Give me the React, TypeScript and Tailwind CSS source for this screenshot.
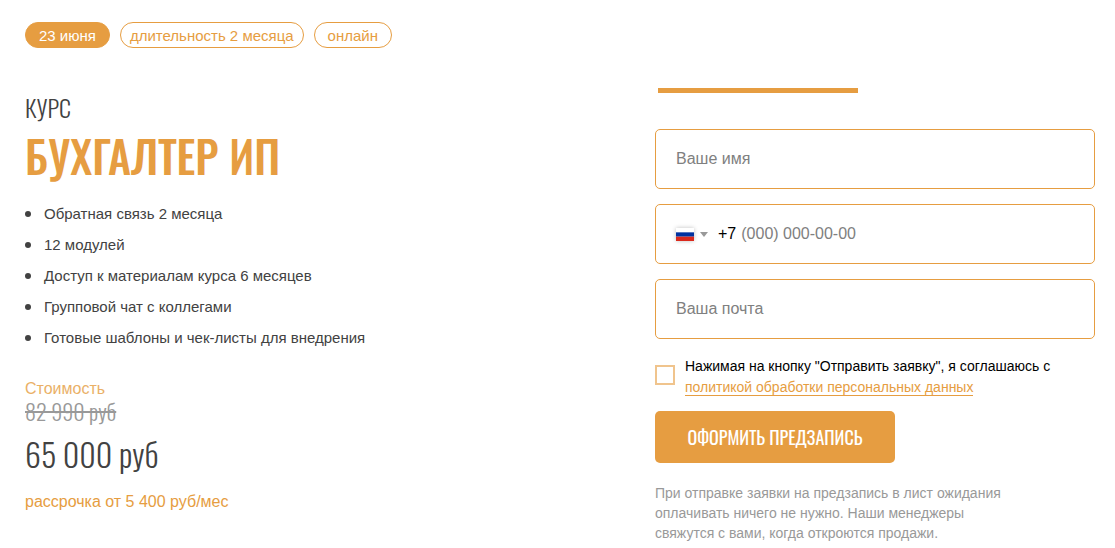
import React, { useState } from 'react';

const features = [
  'Обратная связь 2 месяца',
  '12 модулей',
  'Доступ к материалам курса 6 месяцев',
  'Групповой чат с коллегами',
  'Готовые шаблоны и чек-листы для внедрения',
];

const oswald = "font-['Oswald','Liberation_Sans',sans-serif]";
const field = 'w-full h-[60px] rounded-[5px] border border-[#e69d41] bg-white text-base text-black placeholder:text-[#808080]';
const pill = 'rounded-full border border-[#e69d41] pt-[2px]';

const FlagRu = () => (
  <svg width="18" height="13" viewBox="0 0 18 13" className="shadow-[0_0_4px_rgba(0,0,0,0.25)]" aria-hidden="true">
    <path fill="#fff" d="M0 0h18v4.33H0z" />
    <path fill="#0032a0" d="M0 4.33h18v4.33H0z" />
    <path fill="#da291c" d="M0 8.66h18V13H0z" />
  </svg>
);

const CourseInfo = () => {
  return (
    <section className="flex flex-col items-start text-[#424242]">
      <div className="flex flex-wrap gap-[10px] text-[15px] leading-[22px] text-[#e69d41]">
        <span className={`${pill} bg-[#e69d41] px-[13px] text-white`}>23 июня</span>
        <span className={`${pill} px-[9px]`}>длительность 2 месяца</span>
        <span className={`${pill} px-[13px]`}>онлайн</span>
      </div>
      <p className={`${oswald} mt-11 text-2xl leading-[30px] font-light`}>КУРС</p>
      <h1 className={`${oswald} mt-1 text-[44px] leading-[60px] font-medium text-[#e69d41]`}>БУХГАЛТЕР ИП</h1>
      <ul className="mt-3 text-[15px] leading-[31px]">
        {features.map((item) => (
          <li key={item} className="flex items-center gap-[13px]">
            <span className="size-[6px] shrink-0 rounded-full bg-[#424242]" />
            {item}
          </li>
        ))}
      </ul>
      <p className="mt-[26px] text-base leading-5 text-[#e69d41] opacity-80">Стоимость</p>
      <p className={`${oswald} text-[22px] leading-6 font-light text-[#999] line-through decoration-2`}>82 990 руб</p>
      <p className={`${oswald} mt-[7px] text-[32px] leading-[48px] font-light`}>65 000 руб</p>
      <p className="mt-3 text-base leading-6 text-[#e69d41]">рассрочка от 5 400 руб/мес</p>
    </section>
  );
};

const SignupForm = () => {
  const [phone, setPhone] = useState('');

  return (
    <section className="w-full max-w-[440px]">
      <div className="ml-[3px] h-[5px] w-[200px] bg-[#e69d41]" />
      <form className="mt-9 flex flex-col gap-[15px]" onSubmit={(e) => e.preventDefault()}>
        <input type="text" name="name" aria-label="Ваше имя" placeholder="Ваше имя" className={`${field} px-5`} />
        <div className={`${field} flex items-center pl-5`}>
          <button type="button" aria-label="Код страны" className="flex items-center gap-[6px]">
            <FlagRu />
            <svg width="8" height="5" viewBox="0 0 8 5" aria-hidden="true">
              <path fill="#999" d="M0 0h8L4 5z" />
            </svg>
          </button>
          <span className="ml-[10px]">+7</span>
          <input
            type="tel"
            name="phone"
            aria-label="Телефон"
            placeholder="(000) 000-00-00"
            value={phone}
            onChange={(e) => setPhone(e.target.value)}
            className="ml-[5px] min-w-0 flex-1 outline-none placeholder:text-[#808080]"
          />
        </div>
        <input type="email" name="email" aria-label="Ваша почта" placeholder="Ваша почта" className={`${field} px-5`} />
        <div className="flex items-start gap-[10px] pt-[2px] text-sm leading-[21px] text-black">
          <input
            id="agree"
            type="checkbox"
            className="mt-[9px] size-5 shrink-0 appearance-none border-2 border-[#e69d41] opacity-60 checked:bg-[#e69d41]"
          />
          <label htmlFor="agree">
            Нажимая на кнопку "Отправить заявку", я соглашаюсь с{' '}
            <a href="#policy" className="border-b border-[#e69d41] text-[#e69d41]">
              политикой обработки персональных данных
            </a>
          </label>
        </div>
        <button
          type="submit"
          className={`${oswald} -mt-[2px] h-[52px] w-60 rounded-[5px] bg-[#e69d41] text-lg font-normal text-white`}
        >
          ОФОРМИТЬ ПРЕДЗАПИСЬ
        </button>
      </form>
      <p className="mt-5 max-w-[360px] text-sm leading-5 text-[#999]">
        При отправке заявки на предзапись в лист ожидания оплачивать ничего не нужно. Наши менеджеры свяжутся с вами,
        когда откроются продажи.
      </p>
    </section>
  );
};

const App = () => {
  return (
    <main className="flex flex-col gap-10 bg-white px-5 pt-[22px] font-['Liberation_Sans',Arial,sans-serif] md:flex-row md:justify-between md:pl-[25px]">
      <CourseInfo />
      <div className="flex w-full max-w-[440px] md:pt-[66px]">
        <SignupForm />
      </div>
    </main>
  );
};

export default App;
